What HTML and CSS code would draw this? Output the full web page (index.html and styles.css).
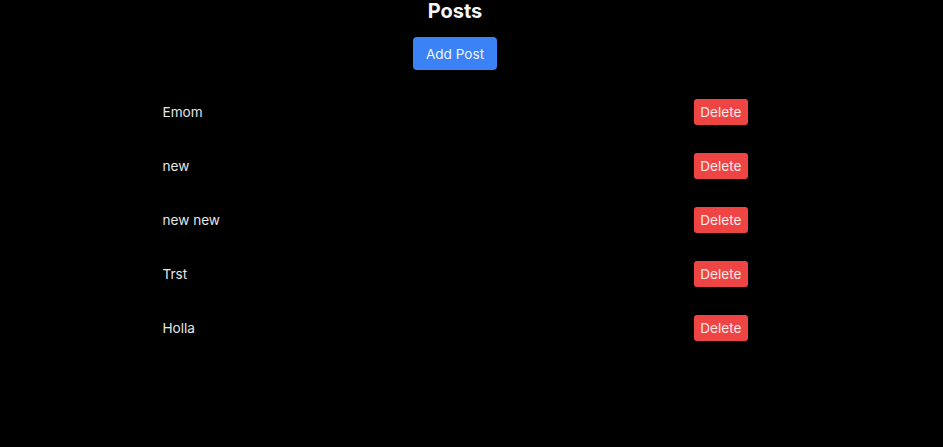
FILE: index.html
```html
<!DOCTYPE html>
<html lang="en">
<head>
<meta charset="utf-8">
<title>Posts</title>
<link rel="stylesheet" href="styles.css">
</head>
<body>
<div class="page">
  <h1 class="title">Posts</h1>
  <button class="btn-add">Add Post</button>
  <ul class="posts">
    <li class="post"><span class="post-title">Emom</span><button class="btn-delete">Delete</button></li>
    <li class="post"><span class="post-title">new</span><button class="btn-delete">Delete</button></li>
    <li class="post"><span class="post-title">new new</span><button class="btn-delete">Delete</button></li>
    <li class="post"><span class="post-title">Trst</span><button class="btn-delete">Delete</button></li>
    <li class="post"><span class="post-title">Holla</span><button class="btn-delete">Delete</button></li>
  </ul>
</div>
</body>
</html>
```
FILE: styles.css
```css
html, body {
  margin: 0;
  padding: 0;
  background: #000;
  height: 100%;
}
body {
  font-family: Inter, "Noto Sans", sans-serif;
  color: #e6e6e6;
}
.page {
  width: 910px;
  display: flex;
  flex-direction: column;
  align-items: center;
}
.title {
  margin: 0;
  font-size: 20px;
  line-height: 22px;
  font-weight: 700;
  color: #f7f7f7;
}
.btn-add {
  margin-top: 15px;
  background: #3b82f6;
  color: #f2f6ff;
  border: none;
  border-radius: 4px;
  font-family: inherit;
  font-size: 13.6px;
  line-height: 20px;
  padding: 6px 13px;
  height: 33px;
}
.posts {
  list-style: none;
  margin: 29px 0 0;
  padding: 0;
  width: 585px;
  display: flex;
  flex-direction: column;
  gap: 28px;
}
.post {
  display: flex;
  justify-content: space-between;
  align-items: center;
  height: 26px;
}
.post-title {
  font-size: 13.6px;
}
.btn-delete {
  background: #ef4444;
  color: #fde8e8;
  border: none;
  border-radius: 3px;
  font-family: inherit;
  font-size: 13.6px;
  line-height: 18px;
  padding: 4px 6px;
  height: 26px;
}
```
